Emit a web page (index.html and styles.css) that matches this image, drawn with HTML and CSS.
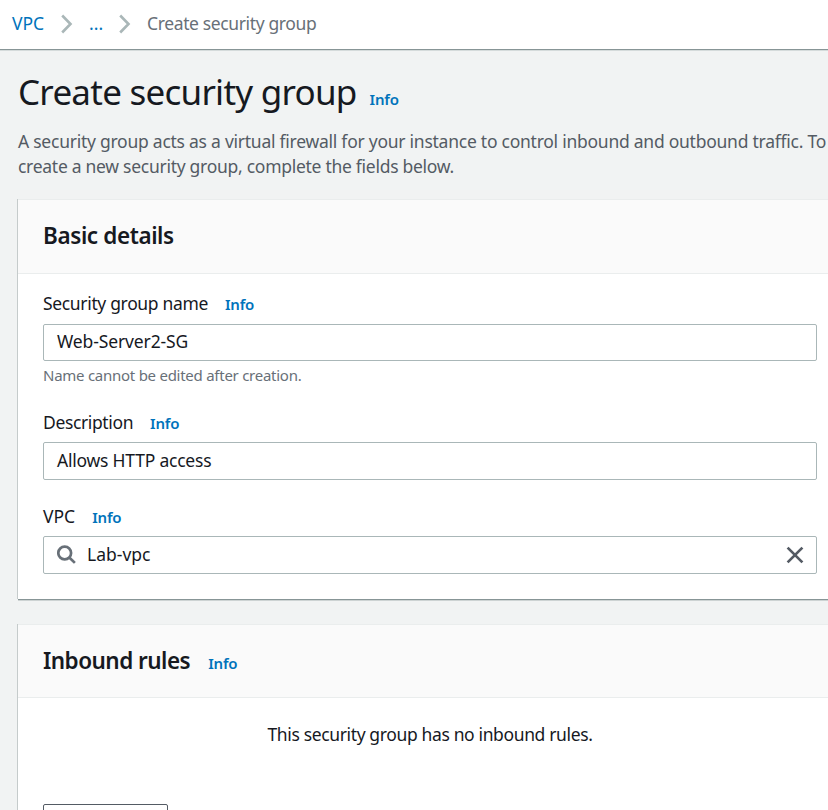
FILE: index.html
```html
<!DOCTYPE html>
<html lang="en">
<head>
<meta charset="utf-8">
<title>Create security group</title>
<link rel="stylesheet" href="styles.css">
</head>
<body>
<nav class="breadcrumb">
  <a class="crumb-vpc" href="#">VPC</a>
  <svg class="chevron" width="12" height="20" viewBox="0 0 12 20"><path d="M1.2 1.5 9.5 10 1.2 18.5"/></svg>
  <a class="crumb-more" href="#">...</a>
  <svg class="chevron" width="12" height="20" viewBox="0 0 12 20"><path d="M1.2 1.5 9.5 10 1.2 18.5"/></svg>
  <span class="crumb-current">Create security group</span>
</nav>
<main class="page">
  <header class="page-header">
    <h1>Create security group</h1>
    <a class="info" href="#">Info</a>
  </header>
  <p class="intro"><span class="intro-first">A security group acts as a virtual firewall for your instance to control inbound and outbound traffic. To</span><br><span class="intro-second">create a new security group, complete the fields below.</span></p>

  <section class="card">
    <div class="card-header"><h2 class="basic-title">Basic details</h2></div>
    <div class="form">
      <div class="field">
        <div class="label"><span class="name-label">Security group name</span><a class="info" href="#">Info</a></div>
        <div class="input input-name">Web-Server2-SG</div>
        <div class="hint">Name cannot be edited after creation.</div>
      </div>
      <div class="field">
        <div class="label"><span class="desc-label">Description</span><a class="info" href="#">Info</a></div>
        <div class="input input-desc">Allows HTTP access</div>
      </div>
      <div class="field">
        <div class="label"><span>VPC</span><a class="info" href="#">Info</a></div>
        <div class="input">
          <svg class="search" width="20" height="20" viewBox="0 0 20 20"><circle cx="7.7" cy="8" r="6.4"/><path d="m12.3 12.5 5.6 5.4"/></svg>
          <span class="vpc-value">Lab-vpc</span>
          <svg class="clear" width="18" height="18" viewBox="0 0 18 18"><path d="m1.6 1.6 14.8 14.8M16.4 1.6 1.6 16.4"/></svg>
        </div>
      </div>
    </div>
  </section>

  <section class="card card-rules">
    <div class="card-header"><h2 class="rules-title">Inbound rules</h2><a class="info" href="#">Info</a></div>
    <div class="rules">
      <p class="empty">This security group has no inbound rules.</p>
      <button class="add-rule" type="button" aria-label="Add rule"></button>
    </div>
  </section>
</main>
</body>
</html>
```
FILE: styles.css
```css
* { box-sizing: border-box; }

body {
  margin: 0;
  height: 810px;
  overflow: hidden;
  background: #f1f3f3;
  color: #16191f;
  font: 17.5px/25px "Noto Sans", sans-serif;
}

h1, h2, p { margin: 0; }

a { color: #0073bb; text-decoration: none; }

.breadcrumb {
  display: flex;
  align-items: flex-start;
  height: 50px;
  padding: 11px 0 0 12px;
  background: #fff;
  border-bottom: 1px solid #879596;
  box-shadow: 0 1px 0 #d5dbdb;
}

.crumb-vpc { width: 49px; }
.crumb-more { width: 30px; margin-left: 16px; }
.crumb-current { margin-left: 16px; color: #687078; letter-spacing: -0.37px; }

.chevron {
  flex: none;
  margin-top: 3px;
  fill: none;
  stroke: #aab7b8;
  stroke-width: 2.6;
}

.page { height: 760px; padding: 20px 0 0 18px; overflow: hidden; }

.page-header { display: flex; align-items: baseline; gap: 13px; }

h1 {
  font-size: 35px;
  font-weight: 400;
  line-height: 44px;
  letter-spacing: -0.75px;
  white-space: nowrap;
}

.info {
  font-size: 15px;
  font-weight: 600;
  line-height: 20px;
  letter-spacing: -0.2px;
}

.intro { margin-top: 15px; color: #545b64; white-space: nowrap; }
.intro-first { letter-spacing: -0.251px; }
.intro-second { letter-spacing: -0.278px; }

.card {
  margin-top: 20px;
  background: #fff;
  border-top: 1px solid #eaeded;
  box-shadow: -1px 0 0 #c5cbcb, 0 1px 0 #879596, 0 2px 0 #cdd3d3;
}

.card-header {
  display: flex;
  align-items: baseline;
  gap: 18px;
  height: 74px;
  padding: 22px 25px 0;
  background: #fafafa;
  border-bottom: 1px solid #eaeded;
}

h2 { font-size: 22.5px; font-weight: 600; line-height: 28px; }
.basic-title { letter-spacing: -0.4px; }
.rules-title { letter-spacing: -0.53px; }

.form {
  display: flex;
  flex-direction: column;
  gap: 24px;
  height: 325px;
  padding: 17px 11px 0 25px;
}

.label { display: flex; align-items: baseline; gap: 17px; height: 25px; }
.name-label { letter-spacing: -0.34px; }
.desc-label { letter-spacing: -0.37px; }

.input {
  display: flex;
  align-items: center;
  height: 38px;
  margin-top: 7px;
  padding: 0 12px 2px 13px;
  border: 1px solid #aab7b8;
  border-radius: 2px;
}
.input-name { height: 37px; margin-top: 8px; letter-spacing: -0.12px; }
.input-desc { letter-spacing: -0.22px; }

.search {
  margin: 2px 10px 0 0;
  fill: none;
  stroke: #687078;
  stroke-width: 2.7;
}

.clear {
  margin: 2px 0 0 auto;
  fill: none;
  stroke: #545b64;
  stroke-width: 2.7;
}

.hint {
  height: 21px;
  margin-top: 4px;
  color: #687078;
  font-size: 15px;
  line-height: 20px;
  letter-spacing: -0.26px;
}

.card-rules { margin-top: 25px; }
.card-rules .card-header { height: 73px; }

.rules { height: 112px; padding: 24px 0 0 25px; overflow: hidden; }

.empty {
  width: 774px;
  text-align: center;
  letter-spacing: -0.366px;
}

.add-rule {
  display: block;
  width: 125px;
  height: 38px;
  margin-top: 57px;
  background: #fff;
  border: 1px solid #545b64;
  border-radius: 2px;
}
```
